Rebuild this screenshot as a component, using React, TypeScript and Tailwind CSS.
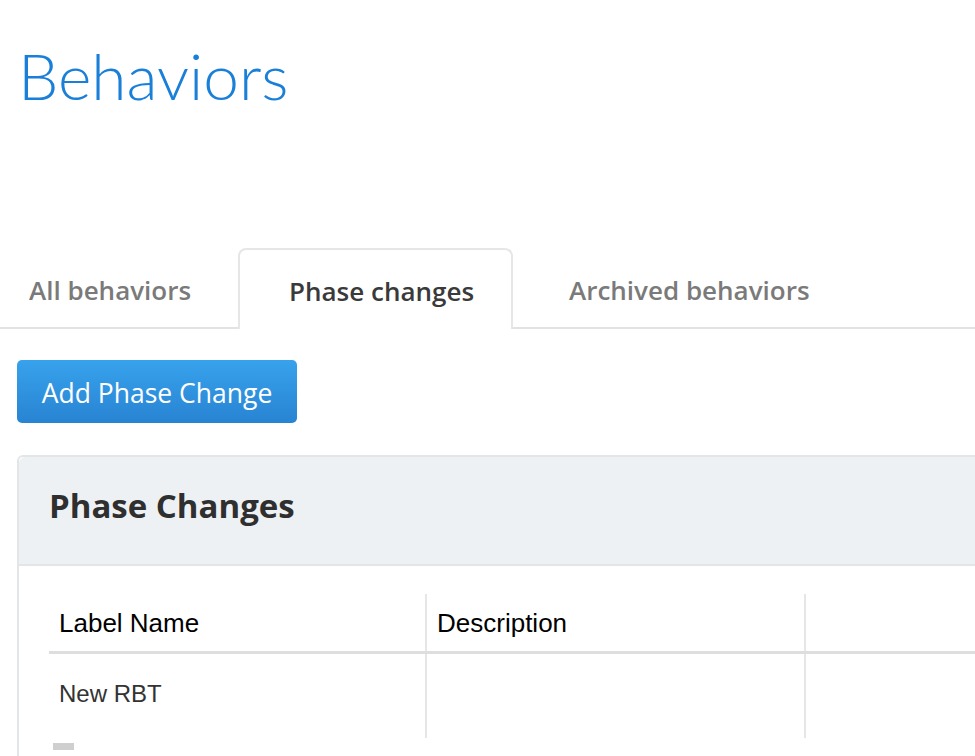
import React from "react";

const tabs = [
  { label: "All behaviors", active: false, pad: "pl-[29px] w-[238px]" },
  { label: "Phase changes", active: true, pad: "pl-[49px] w-[275px]" },
  { label: "Archived behaviors", active: false, pad: "pl-[56px] flex-1" },
];

const rows = [{ label: "New RBT", description: "" }];

export default function App() {
  return (
    <div className="h-[756px] w-[975px] overflow-hidden bg-white font-['Open_Sans',sans-serif]">
      <h1 className="pl-[18px] pt-[28px] font-['Lato',sans-serif] text-[64px] font-light leading-[96px] text-[#1a7fd8]">
        Behaviors
      </h1>

      {/* tab strip */}
      <nav className="mt-[124px] flex h-[81px] border-b-2 border-[#e2e2e2]">
        {tabs.map((t) => (
          <div
            key={t.label}
            className={`flex items-center text-[26px] font-semibold ${t.pad} ${
              t.active
                ? "-mb-[2px] rounded-t-[8px] border-2 border-b-0 border-[#e6e6e6] bg-white pt-[3px] text-[#3a3a3a]"
                : "pt-[5px] text-[#7a7a7a]"
            }`}
          >
            {t.label}
          </div>
        ))}
      </nav>

      <div className="px-[17px] pt-[31px]">
        <button
          type="button"
          className="h-[63px] w-[280px] rounded-[5px] bg-gradient-to-b from-[#38a2ec] to-[#2884d3] pt-[4px] text-[26.5px] text-white"
        >
          Add Phase Change
        </button>

        {/* panel */}
        <section className="mt-[32px] w-[1000px] rounded-t-[6px] border-2 border-[#e3e6e9]">
          <div className="flex h-[109px] items-center rounded-t-[6px] border-b-2 border-[#e3e6e9] bg-[#eef1f4] pb-[10px] pl-[30px]">
            <h2 className="text-[33px] font-bold text-[#2f2f2f]">Phase Changes</h2>
          </div>

          <div className="pb-[40px] pl-[30px] pt-[28px] font-['Liberation_Sans',Arial,sans-serif]">
            <table className="border-collapse text-left">
              <thead>
                <tr className="h-[58px] border-b-[3px] border-[#dedede]">
                  <th className="w-[377px] px-[10px] pt-[2px] text-[26px] font-normal text-black">
                    Label Name
                  </th>
                  <th className="w-[379px] border-l-2 border-[#e6e6e6] px-[10px] pt-[2px] text-[26px] font-normal text-black">
                    Description
                  </th>
                  <th className="w-[200px] border-l-2 border-[#e6e6e6]" />
                </tr>
              </thead>
              <tbody>
                {rows.map((r) => (
                  <tr key={r.label} className="h-[86px]">
                    <td className="px-[10px] pb-[4px] text-[24px] text-[#333]">{r.label}</td>
                    <td className="border-l-2 border-[#e6e6e6] px-[10px]">{r.description}</td>
                    <td className="border-l-2 border-[#e6e6e6]" />
                  </tr>
                ))}
              </tbody>
            </table>
            <div className="ml-[4px] mt-[5px] h-[7px] w-[21px] bg-[#cfcfcf]" />
          </div>
        </section>
      </div>
    </div>
  );
}
